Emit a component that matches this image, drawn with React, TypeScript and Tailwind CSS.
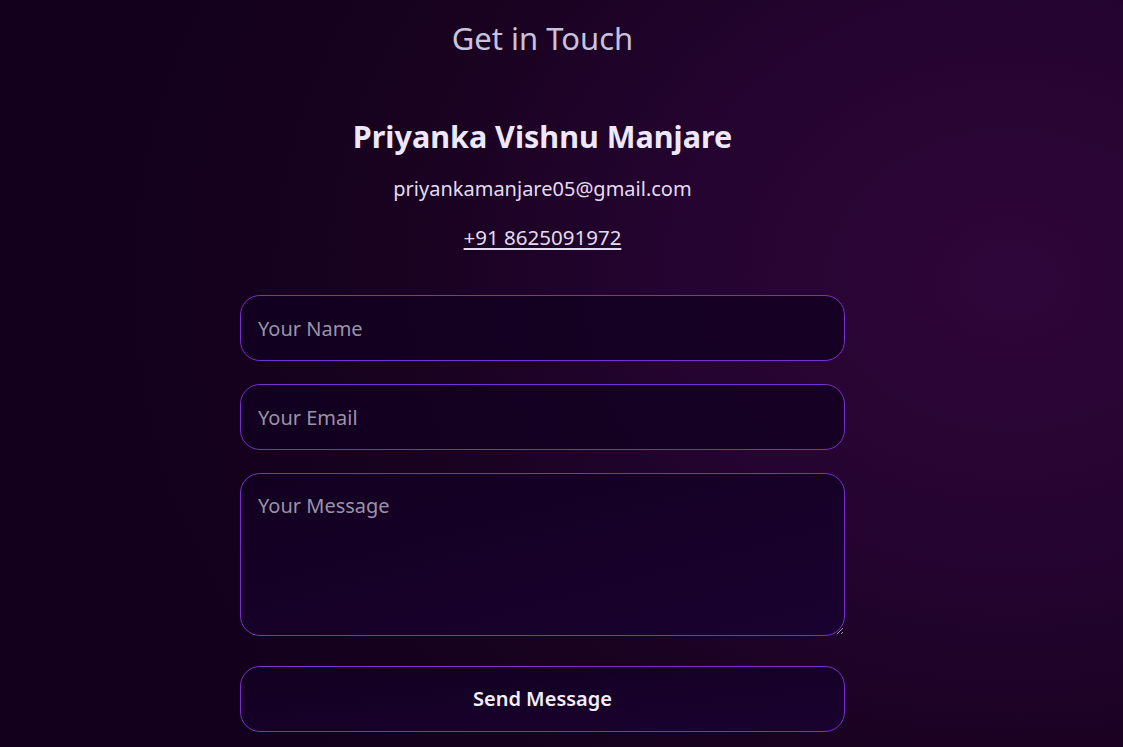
import React from "react";

export default function App() {
  return (
    <div
      className="min-h-[747px] w-full flex flex-col items-center text-white pr-[38px]"
      style={{
        fontFamily: '"Noto Sans", "Open Sans", sans-serif',
        background:
          "radial-gradient(ellipse 900px 750px at 1010px 280px, #2f0639 0%, #250431 35%, #18021f 70%, #12001c 100%)",
      }}
    >
      <h2 className="mt-[18px] text-[31px] leading-[40px] font-normal text-[#c9c2dd]">Get in Touch</h2>
      <div className="mt-[56px] flex flex-col items-center">
        <h3 className="text-[30.5px] leading-[44px] font-bold text-[#efe8fb]">Priyanka Vishnu Manjare</h3>
        <p className="mt-[18px] text-[20px] leading-[26px] text-[#e4ddf0]">priyankamanjare05@gmail.com</p>
        <a href="#" className="mt-[22px] text-[20.5px] leading-[26px] text-[#e4ddf0] underline underline-offset-[3px]">
          +91 8625091972
        </a>
      </div>
      <form className="mt-[45px] w-[605px] flex flex-col gap-[23px]" onSubmit={(e) => e.preventDefault()}>
        <input
          placeholder="Your Name"
          className="h-[66px] w-full rounded-[20px] border border-[#7a2fd0] bg-[#120020]/80 px-[17px] text-[20px] text-white placeholder:text-[#9a93a9] outline-none"
        />
        <input
          placeholder="Your Email"
          className="h-[66px] w-full rounded-[20px] border border-[#7a2fd0] bg-[#120020]/80 px-[17px] text-[20px] text-white placeholder:text-[#9a93a9] outline-none"
        />
        <textarea
          placeholder="Your Message"
          className="h-[163px] w-full rounded-[20px] border border-[#7a2fd0] bg-gradient-to-br from-[#120020] to-[#1a0230] px-[17px] py-[19px] text-[20px] leading-[26px] text-white placeholder:text-[#9a93a9] outline-none"
        />
        <button
          type="submit"
          className="mt-[7px] h-[66px] w-full rounded-[20px] border border-[#7a2fd0] bg-gradient-to-br from-[#120020] to-[#1a0230] text-[20px] font-semibold text-[#f3eefb]"
        >
          Send Message
        </button>
      </form>
    </div>
  );
}
